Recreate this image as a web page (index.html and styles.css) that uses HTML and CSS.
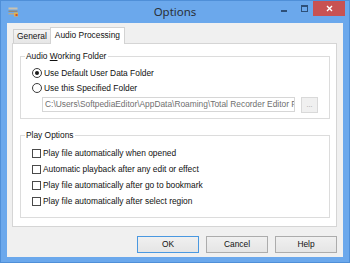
FILE: index.html
```html
<!DOCTYPE html>
<html lang="en">
<head>
    <meta charset="UTF-8">
    <title>Options</title>
    <link rel="stylesheet" href="styles.css">
</head>
<body>
    <div class="window">
        <!-- title bar -->
        <div class="titlebar">
            <svg class="app-icon" width="11" height="10" viewBox="0 0 11 10">
                <rect x="0.5" y="0.5" width="9" height="2" fill="#c9c2b0"/>
                <rect x="0.5" y="3.5" width="9" height="1.5" fill="#8f8a80"/>
                <rect x="0.5" y="6" width="7" height="1.5" fill="#b8a98a"/>
                <rect x="6" y="5.5" width="4" height="4" fill="#e2b14a"/>
                <rect x="7.5" y="7" width="2" height="2" fill="#c9503c"/>
            </svg>
            <div class="title">Options</div>
            <div class="caption-buttons">
                <span class="cap-min"></span>
                <span class="cap-max"></span>
                <span class="cap-close">
                    <svg width="7" height="7" viewBox="0 0 7 7">
                        <path d="M1 1 L6 6 M6 1 L1 6" stroke="#fff" stroke-width="1.4"/>
                    </svg>
                </span>
            </div>
        </div>

        <div class="client">
            <!-- tabs -->
            <div class="tabs">
                <div class="tab">General</div>
                <div class="tab active">Audio Processing</div>
            </div>

            <div class="panel">
                <fieldset class="group group-folder">
                    <legend>Audio <u>W</u>orking Folder</legend>
                    <div class="option"><span class="radio checked"></span>Use Default User Data Folder</div>
                    <div class="option"><span class="radio"></span>Use this Specified Folder</div>
                    <div class="path-row">
                        <div class="path-box">C:\Users\SoftpediaEditor\AppData\Roaming\Total Recorder Editor P</div>
                        <div class="browse-btn">...</div>
                    </div>
                </fieldset>

                <fieldset class="group group-play">
                    <legend>Play Options</legend>
                    <div class="option check-row"><span class="checkbox"></span>Play file automatically when opened</div>
                    <div class="option check-row"><span class="checkbox"></span>Automatic playback after any edit or effect</div>
                    <div class="option check-row"><span class="checkbox"></span>Play file automatically after go to bookmark</div>
                    <div class="option check-row"><span class="checkbox"></span>Play file automatically after select region</div>
                </fieldset>
            </div>

            <!-- dialog buttons -->
            <div class="buttons">
                <div class="btn default">OK</div>
                <div class="btn">Cancel</div>
                <div class="btn">Help</div>
            </div>
        </div>
    </div>
</body>
</html>
```

FILE: styles.css
```css
* {
    margin: 0;
    padding: 0;
    box-sizing: border-box;
}

body {
    width: 350px;
    height: 263px;
    overflow: hidden;
    font-family: "Liberation Sans", Arial, sans-serif;
    font-size: 8.4px;
    color: #111111;
}

/* window frame */
.window {
    width: 350px;
    height: 263px;
    display: flex;
    flex-direction: column;
    background-color: #6ba8ec;
    border: 1px solid #4f8fd8;
    padding: 0 6px 5px 6px;
}

/* title bar */
.titlebar {
    height: 22px;
    display: grid;
    grid-template-columns: 1fr auto 1fr;
    align-items: start;
}

.app-icon {
    margin: 6px 0 0 1px;
}

.title {
    font-family: "Noto Sans", "Open Sans", sans-serif;
    font-size: 11.5px;
    color: #2a2f36;
    margin-top: 3px;
}

.caption-buttons {
    justify-self: end;
    display: flex;
    align-items: flex-start;
    margin-right: -2px;
}

.cap-min {
    width: 6px;
    height: 2px;
    background-color: #2d4f78;
    margin: 9px 14px 0 0;
}

.cap-max {
    width: 7px;
    height: 7px;
    border: 1px solid #2d4f78;
    border-top-width: 2px;
    margin: 4px 5px 0 0;
}

.cap-close {
    width: 32px;
    height: 15px;
    background-color: #c85252;
    display: flex;
    align-items: center;
    justify-content: center;
}

/* client area */
.client {
    flex: 1;
    background-color: #f0f0f0;
    padding: 4px 6px 0 5px;
    display: flex;
    flex-direction: column;
}

.tabs {
    display: flex;
    align-items: flex-end;
    height: 16px;
    padding-left: 1px;
    position: relative;
    z-index: 1;
}

.tab {
    height: 14px;
    padding: 0 3px;
    line-height: 13px;
    border: 1px solid #d0d0d0;
    border-bottom: none;
    background: linear-gradient(#f4f4f4, #e6e6e6);
}

.tab.active {
    height: 17px;
    margin-bottom: -1px;
    margin-left: -1px;
    padding: 0 4px;
    line-height: 14px;
    background: #ffffff;
    border-color: #d3d3d3;
}

.panel {
    height: 184px;
    background-color: #ffffff;
    border: 1px solid #d5d5d5;
    padding: 7px 6px 0 7px;
}

/* group boxes */
.group {
    border: 1px solid #dcdcdc;
    padding: 4px 10px 5px 11px;
}

.group legend {
    margin-left: -7px;
    padding: 0 2px 0 1px;
    line-height: 10px;
}

.group-play {
    margin-top: 11px;
    padding-top: 5px;
    padding-bottom: 8px;
}

.option {
    display: flex;
    align-items: center;
    height: 15px;
}

.check-row {
    height: 16px;
}

.radio {
    width: 10px;
    height: 10px;
    border: 1px solid #3c3c3c;
    border-radius: 50%;
    background-color: #ffffff;
    margin-right: 2px;
    display: flex;
    align-items: center;
    justify-content: center;
}

.radio.checked::after {
    content: "";
    width: 4px;
    height: 4px;
    border-radius: 50%;
    background-color: #1a1a1a;
}

.checkbox {
    width: 9px;
    height: 9px;
    border: 1px solid #4a4a4a;
    background-color: #ffffff;
    margin-right: 2px;
}

.path-row {
    display: flex;
    gap: 6px;
    margin: 2px 0 0 10px;
}

.path-box {
    width: 253px;
    height: 15px;
    border: 1px solid #d6d6d6;
    background-color: #ffffff;
    color: #6f6f6f;
    padding-left: 2px;
    line-height: 13px;
    white-space: nowrap;
    overflow: hidden;
}

.browse-btn {
    width: 17px;
    height: 16px;
    border: 1px solid #d9d9d9;
    background-color: #f0f0f0;
    color: #9a9a9a;
    text-align: center;
    line-height: 14px;
    font-size: 7px;
}

/* buttons */
.buttons {
    display: flex;
    justify-content: flex-end;
    gap: 7px;
    margin-top: 9px;
}

.btn {
    width: 62px;
    height: 17px;
    border: 1px solid #acacac;
    background: linear-gradient(#f0f0f0, #e5e5e5);
    text-align: center;
    line-height: 15px;
}

.btn.default {
    border-color: #4a98e0;
}
```
